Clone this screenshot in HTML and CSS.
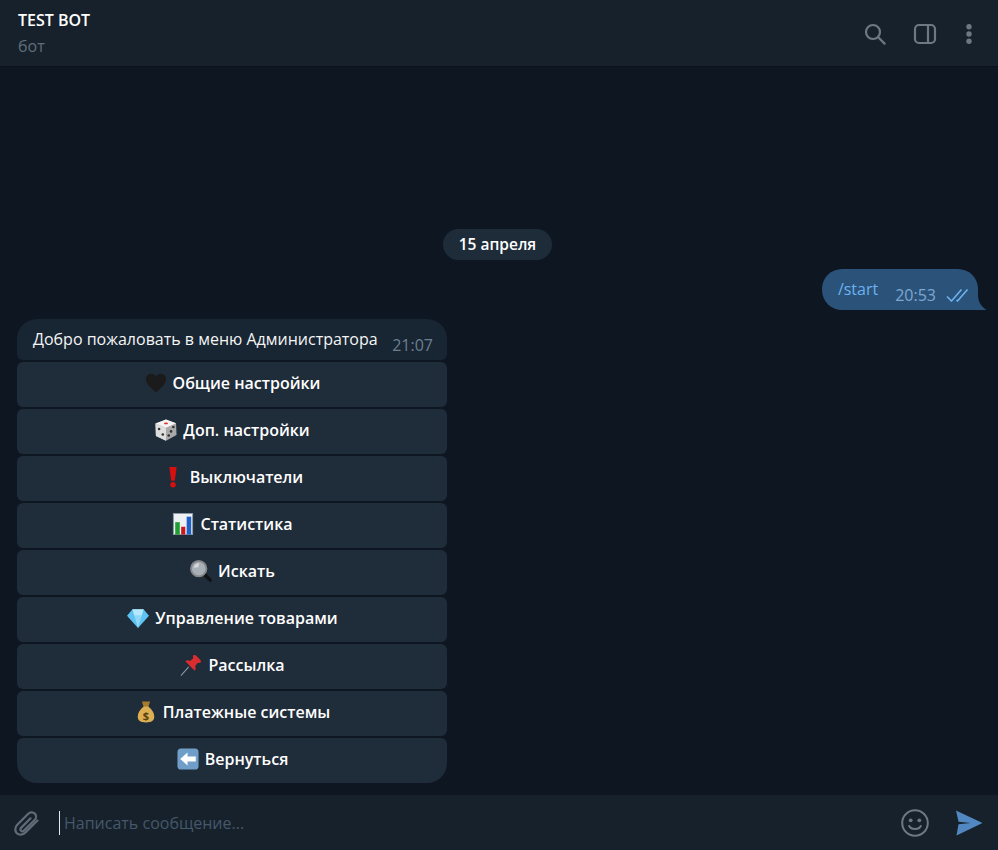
FILE: index.html
```html
<!DOCTYPE html>
<html lang="ru">
<head>
  <meta charset="UTF-8">
  <meta name="viewport" content="width=device-width, initial-scale=1.0">
  <title>TEST BOT</title>
  <link rel="stylesheet" href="styles.css">
</head>
<body>
  <div class="app">
    <header class="topbar">
      <div class="peer">
        <div class="peer-name">TEST BOT</div>
        <div class="peer-status">бот</div>
      </div>
      <div class="topbar-icons">
        <svg class="icon" width="24" height="24" viewBox="0 0 24 24"><circle cx="10" cy="10" r="7"/><path d="M15.2 15.2 L21.6 21.6" stroke-linecap="round"/></svg>
        <svg class="icon" width="24" height="24" viewBox="0 0 24 24"><rect x="2" y="3" width="20" height="18" rx="4"/><path d="M15 3 V21"/></svg>
        <svg class="icon-fill" width="24" height="24" viewBox="0 0 24 24"><circle cx="12" cy="4.7" r="2.7"/><circle cx="12" cy="12" r="2.7"/><circle cx="12" cy="19.3" r="2.7"/></svg>
      </div>
    </header>

    <main class="chat">
      <div class="date-row"><span class="date">15 апреля</span></div>

      <div class="out-row">
        <div class="out-bubble">
          <span class="out-text">/start</span>
          <span class="out-time">20:53</span>
          <svg class="checks" width="24" height="14" viewBox="0 0 24 14"><path d="M1 8.5 L5.5 13 L15.5 1.5"/><path d="M10.5 12 L11.5 13 L21.5 1.5"/></svg>
          <svg class="tail" width="12" height="14" viewBox="0 0 12 14"><path d="M0 0 C0.5 7 4 11 8.5 14 L0 14 Z"/></svg>
        </div>
      </div>

      <div class="in-block">
        <div class="in-bubble">
          <span class="in-text">Добро пожаловать в меню Администратора</span>
          <span class="in-time">21:07</span>
        </div>
        <div class="keyboard">
          <div class="kb-btn">
            <svg class="emoji" viewBox="0 0 24 24"><path fill="#1b1b1b" d="M12 22.5 C7 17.5 1 13.5 1 8 C1 4.4 3.6 2 6.6 2 C9 2 11 3.3 12 5.4 C13 3.3 15 2 17.4 2 C20.4 2 23 4.4 23 8 C23 13.5 17 17.5 12 22.5 Z"/></svg>
            <span>Общие настройки</span>
          </div>
          <div class="kb-btn">
            <svg class="emoji" viewBox="0 0 24 24"><path fill="#a9a9a9" d="M12 0.5 L23 4.5 L23.5 17.5 L12 23.8 L1 18.5 L0.5 5 Z"/><path fill="#f4f4f4" d="M12 0.5 L23 4.5 L12 9.5 L0.5 5 Z"/><path fill="#dedede" d="M0.5 5 L12 9.5 L12 23.8 L1 18.5 Z"/><ellipse cx="12" cy="4.8" rx="2.2" ry="1" fill="#d33"/><circle cx="4.5" cy="11" r="1.4" fill="#333"/><circle cx="8.5" cy="17" r="1.4" fill="#333"/><circle cx="20" cy="8.8" r="1.4" fill="#333"/><circle cx="17.5" cy="13.5" r="1.4" fill="#333"/><circle cx="15" cy="18" r="1.4" fill="#333"/></svg>
            <span>Доп. настройки</span>
          </div>
          <div class="kb-btn">
            <svg class="emoji" viewBox="0 0 24 24"><path fill="#d80f0f" d="M8 1 H16 L14 16 H10 Z"/><circle cx="12" cy="20.5" r="3" fill="#d80f0f"/></svg>
            <span>Выключатели</span>
          </div>
          <div class="kb-btn">
            <svg class="emoji" viewBox="0 0 24 24"><rect x="1.5" y="0.5" width="21" height="23" fill="#eef1f4" stroke="#8a99a8"/><rect x="3.5" y="10" width="5" height="13.5" fill="#1f9e33"/><rect x="10" y="15" width="4.5" height="8.5" fill="#c9191f"/><rect x="16" y="4" width="5" height="19.5" fill="#1d62c4"/></svg>
            <span>Статистика</span>
          </div>
          <div class="kb-btn">
            <svg class="emoji" viewBox="0 0 24 24"><path d="M15 15 L22 22" stroke="#101214" stroke-width="3.6" stroke-linecap="round"/><circle cx="9.5" cy="9.5" r="8.4" fill="#a9afb6" stroke="#85878b" stroke-width="2"/><path d="M4 8.5 A6 6 0 0 1 10 3.5 L9 8 Z" fill="#d5d9dd"/></svg>
            <span>Искать</span>
          </div>
          <div class="kb-btn">
            <svg class="emoji" viewBox="0 0 24 24"><path fill="#5ec3f2" d="M6 2.5 H18 L24 9.5 L12 23 L0 9.5 Z"/><path fill="#b5e8fc" d="M6 2.5 H18 L16 9.5 H8 Z"/><path fill="#8fd8f8" d="M8 9.5 H16 L12 23 Z"/></svg>
            <span>Управление товарами</span>
          </div>
          <div class="kb-btn">
            <svg class="emoji" viewBox="0 0 24 24"><path d="M1 23.5 L9.5 14" stroke="#8b97a3" stroke-width="1.2"/><path fill="#d92d30" d="M14.5 1.5 C15.5 0.6 16.8 1 17.8 2 L22 6.2 C23 7.2 23.2 8.6 22.3 9.4 C21.4 10.1 20.4 9.9 19.5 9.6 L16.5 13 C17.5 15 17.2 17 16 18.2 L5.8 8 C7 6.8 9 6.5 11 7.5 L14.4 4.5 C14.1 3.6 13.9 2.4 14.5 1.5 Z"/></svg>
            <span>Рассылка</span>
          </div>
          <div class="kb-btn">
            <svg class="emoji" viewBox="0 0 24 24"><path fill="#a87a2c" d="M7.5 0.5 H16.5 L14.5 6.5 H9.5 Z"/><path fill="#dcb052" d="M9.5 6 H14.5 C18.5 9 21 13 21 17 C21 21.5 18 23.5 12 23.5 C6 23.5 3 21.5 3 17 C3 13 5.5 9 9.5 6 Z"/><text x="12" y="20.5" class="emoji-dollar">$</text></svg>
            <span>Платежные системы</span>
          </div>
          <div class="kb-btn">
            <svg class="emoji" viewBox="0 0 24 24"><rect x="0.5" y="0.5" width="23" height="23" rx="4" fill="#6f9fc9"/><path fill="#fff" d="M3.5 12 L11.5 5 V9.2 H20.5 V14.8 H11.5 V19 Z"/></svg>
            <span>Вернуться</span>
          </div>
        </div>
      </div>
    </main>

    <footer class="composer">
      <svg class="attach" width="28" height="28" viewBox="0 0 28 28"><path d="M24.5 10.5 L12.5 22.5 C9.8 25.2 5.8 25.2 3.8 23.2 C1.6 21 1.8 17.2 4.5 14.5 L15 4 C17 2 20 1.8 21.8 3.6 C23.6 5.4 23.4 8.2 21.4 10.2 L11.2 20.4 C10.2 21.4 8.8 21.5 8 20.7 C7.2 19.9 7.3 18.6 8.3 17.6 L17.6 8.3"/></svg>
      <div class="input">
        <span class="caret"></span>
        <span class="placeholder">Написать сообщение...</span>
      </div>
      <svg class="smile" width="28" height="28" viewBox="0 0 28 28"><circle cx="14" cy="14" r="12.8"/><circle class="dot" cx="9.7" cy="11.3" r="1.9"/><circle class="dot" cx="18.3" cy="11.3" r="1.9"/><path d="M8.2 17 C10 21 18 21 19.8 17"/></svg>
      <svg class="send" width="28" height="26" viewBox="0 0 28 26"><path d="M1 0.5 L27.5 13 L1.5 25.5 L3.5 14.2 L15.5 13 L3.5 11.8 Z"/></svg>
    </footer>
  </div>
</body>
</html>
```

FILE: styles.css
```css
* {
  box-sizing: border-box;
}
body {
  margin: 0;
  background-color: #0e1621;
  font-family: "Open Sans", "Noto Sans", sans-serif;
  color: #f5f5f5;
}
.app {
  display: flex;
  flex-direction: column;
  height: 850px;
}

/* header */
.topbar {
  display: flex;
  align-items: center;
  justify-content: space-between;
  height: 67px;
  padding: 0 17px 0 18px;
  background-color: #17212b;
  border-bottom: 1px solid #0b121a;
}
.peer {
  margin-top: 1px;
}
.peer-name {
  font-size: 16px;
  font-weight: 600;
  line-height: 25px;
  color: #fff;
}
.peer-status {
  font-size: 16px;
  line-height: 26px;
  color: #5f6e7c;
}
.topbar-icons {
  display: flex;
  align-items: center;
  gap: 26px;
  margin-top: 1px;
}
.icon {
  fill: none;
  stroke: #6d7883;
  stroke-width: 2.2;
}
.icon-fill {
  margin-left: -6px;
  fill: #6d7883;
}

/* messages */
.chat {
  flex: 1;
  display: flex;
  flex-direction: column;
  justify-content: flex-end;
  padding: 0 20px 12px 17px;
}
.date-row {
  display: flex;
  justify-content: center;
  margin-bottom: 9px;
}
.date {
  height: 31px;
  padding: 0 15.5px;
  border-radius: 16px;
  background-color: #1e2c3a;
  font-size: 15.5px;
  font-weight: 600;
  line-height: 30px;
  color: #fff;
}
.out-row {
  display: flex;
  justify-content: flex-end;
  margin-bottom: 9px;
}
.out-bubble {
  position: relative;
  display: flex;
  align-items: flex-start;
  height: 41px;
  padding: 10px 8px 0 16px;
  background-color: #2b5278;
  border-radius: 20px 20px 0 20px;
}
.out-text {
  font-size: 16px;
  line-height: 21px;
  color: #6ab3f3;
}
.out-time {
  margin: 6px 0 0 17px;
  font-size: 16px;
  line-height: 20px;
  color: #7da8d3;
}
.checks {
  margin: 9px 0 0 10px;
  fill: none;
  stroke: #6ab3f3;
  stroke-width: 1.6;
}
.tail {
  position: absolute;
  left: 100%;
  bottom: 0;
  fill: #2b5278;
}
.in-block {
  width: 430px;
}
.in-bubble {
  display: flex;
  justify-content: space-between;
  height: 41px;
  padding: 10px 14px 0 16px;
  background-color: #182533;
  border-radius: 20px 20px 6px 6px;
}
.in-text {
  font-size: 16px;
  line-height: 21px;
}
.in-time {
  margin-top: 6px;
  font-size: 16px;
  line-height: 20px;
  color: #6d7f8f;
}

/* inline keyboard */
.keyboard {
  display: flex;
  flex-direction: column;
  gap: 2px;
  margin-top: 2px;
}
.kb-btn {
  display: flex;
  align-items: center;
  justify-content: center;
  height: 45px;
  padding: 0 0 3px 1px;
  border-radius: 6px;
  background-color: #1f2c3a;
  font-size: 16px;
  font-weight: 600;
  color: #fff;
}
.kb-btn:last-child {
  border-radius: 6px 6px 20px 20px;
}
.emoji {
  width: 22px;
  height: 22px;
  margin-right: 6px;
  flex-shrink: 0;
}
.emoji-dollar {
  font-size: 12px;
  font-weight: 700;
  fill: #5a3f10;
  text-anchor: middle;
}

/* bottom input */
.composer {
  display: flex;
  align-items: center;
  height: 55px;
  padding: 0 15px 0 13px;
  background-color: #17212b;
}
.attach {
  margin-top: 2px;
  fill: none;
  stroke: #5f6b76;
  stroke-width: 2.2;
  stroke-linecap: round;
}
.input {
  flex: 1;
  display: flex;
  align-items: center;
  gap: 4px;
  margin-left: 18px;
}
.caret {
  width: 1px;
  height: 24px;
  background-color: #e8e8e8;
}
.placeholder {
  font-size: 16px;
  color: #44586a;
}
.smile {
  margin-right: 26px;
  fill: none;
  stroke: #6d7883;
  stroke-width: 2;
  stroke-linecap: round;
}
.smile .dot {
  fill: #6d7883;
  stroke: none;
}
.send {
  fill: #5288c1;
}
```
